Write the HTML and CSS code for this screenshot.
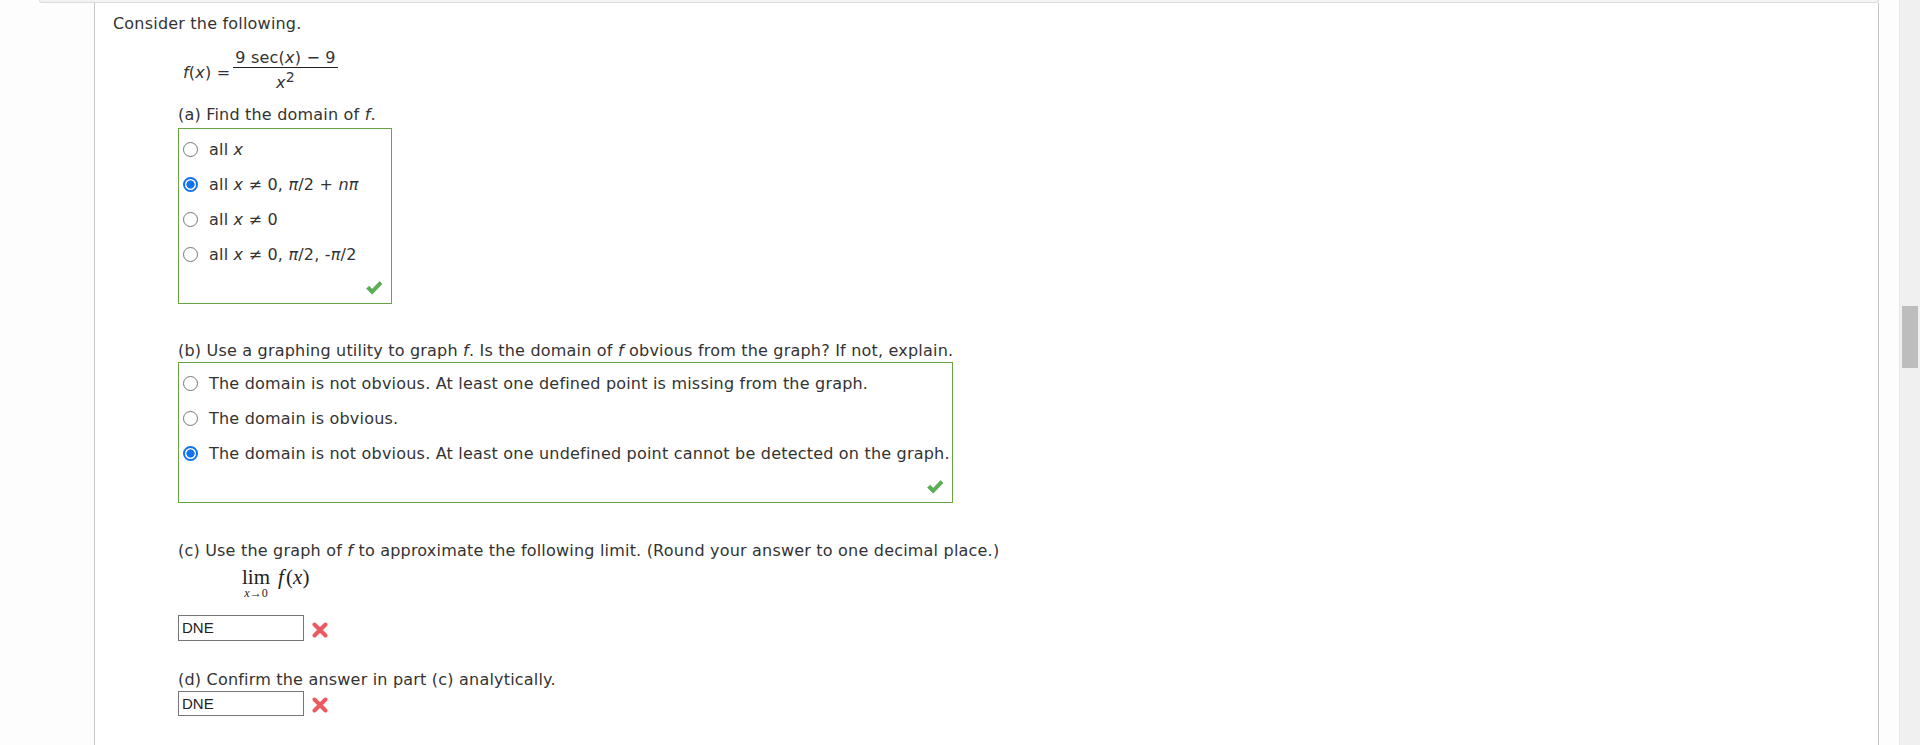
FILE: index.html
```html
<!DOCTYPE html>
<html lang="en">
<head>
<meta charset="utf-8">
<title>Consider the following</title>
<link rel="stylesheet" href="styles.css">
</head>
<body>
<div class="app">
  <div class="page">
    <div class="topstrip"></div>
    <div class="panel">
      <p class="intro">Consider the following.</p>
      <div class="formula">
        <span class="lhs"><i>f</i>(<i>x</i>) =</span>
        <span class="frac">
          <span class="num">9 sec(<i>x</i>) − 9</span>
          <span class="den"><i>x</i><sup>2</sup></span>
        </span>
      </div>

      <p class="q q-a">(a) Find the domain of <i>f</i>.</p>
      <div class="choices choices-a">
        <div class="opt"><span class="radio"></span><span>all <i>x</i></span></div>
        <div class="opt"><span class="radio checked"></span><span>all <i>x</i> ≠ 0, <i>π</i>/2 + <i>nπ</i></span></div>
        <div class="opt"><span class="radio"></span><span>all <i>x</i> ≠ 0</span></div>
        <div class="opt"><span class="radio"></span><span>all <i>x</i> ≠ 0, <i>π</i>/2, -<i>π</i>/2</span></div>
        <div class="foot">
          <svg class="check" width="18" height="16" viewBox="0 0 18 16"><path d="M1.5 8.6 L4.2 6.2 L7.2 9.2 L14.6 1.6 L17 4 L7.2 14.2 Z" fill="#5cb054" stroke="#4a9c44" stroke-width="0.6" stroke-linejoin="round"/></svg>
        </div>
      </div>

      <p class="q q-b">(b) Use a graphing utility to graph <i>f</i>. Is the domain of <i>f</i> obvious from the graph? If not, explain.</p>
      <div class="choices choices-b">
        <div class="opt"><span class="radio"></span><span>The domain is not obvious. At least one defined point is missing from the graph.</span></div>
        <div class="opt"><span class="radio"></span><span>The domain is obvious.</span></div>
        <div class="opt"><span class="radio checked"></span><span>The domain is not obvious. At least one undefined point cannot be detected on the graph.</span></div>
        <div class="foot">
          <svg class="check" width="18" height="16" viewBox="0 0 18 16"><path d="M1.5 8.6 L4.2 6.2 L7.2 9.2 L14.6 1.6 L17 4 L7.2 14.2 Z" fill="#5cb054" stroke="#4a9c44" stroke-width="0.6" stroke-linejoin="round"/></svg>
        </div>
      </div>

      <p class="q q-c">(c) Use the graph of <i>f</i> to approximate the following limit. (Round your answer to one decimal place.)</p>
      <div class="limit">
        <span class="limcol"><span class="lim">lim</span><span class="sub"><i>x</i>→0</span></span>
        <span class="fx"><i>f</i> (<i>x</i>)</span>
      </div>
      <div class="answer answer-c">
        <span class="input">DNE</span>
        <svg class="cross" width="16" height="16" viewBox="0 0 16 16"><path d="M2.5 2.5 L13.5 13.5 M13.5 2.5 L2.5 13.5" stroke="#ec5a5f" stroke-width="4" stroke-linecap="round"/></svg>
      </div>

      <p class="q q-d">(d) Confirm the answer in part (c) analytically.</p>
      <div class="answer answer-d">
        <span class="input">DNE</span>
        <svg class="cross" width="16" height="16" viewBox="0 0 16 16"><path d="M2.5 2.5 L13.5 13.5 M13.5 2.5 L2.5 13.5" stroke="#ec5a5f" stroke-width="4" stroke-linecap="round"/></svg>
      </div>
    </div>
  </div>
  <div class="scrollbar"><div class="thumb"></div></div>
</div>
</body>
</html>
```

FILE: styles.css
```css
html, body {
  margin: 0;
  padding: 0;
  height: 745px;
  overflow: hidden;
  background: #fdfdfd;
}

.app {
  display: flex;
  height: 745px;
  font-family: "DejaVu Sans", Verdana, sans-serif;
  font-size: 16px;
  letter-spacing: 0.2px;
  color: #333;
}

.page {
  flex: 1;
  display: flex;
  flex-direction: column;
  min-width: 0;
}

.topstrip {
  height: 2px;
  margin: 0 20px 0 39px;
  background: #f3f3f3;
  border: 1px solid #dcdcdc;
  border-top: none;
  border-radius: 0 0 3px 3px;
}

.panel {
  flex: 1;
  margin: 0 20px 0 94px;
  border-left: 1px solid #c6c6c6;
  border-right: 1px solid #c6c6c6;
  background: #fff;
  padding: 11px 0 0 18px;
}

p { margin: 0; }

.intro {
  line-height: 20px;
}

i { font-style: italic; }

.formula {
  display: flex;
  align-items: center;
  margin: 14px 0 0 70px;
}

.lhs {
  line-height: 20px;
  padding-top: 4px;
  margin-right: 3px;
}

.frac {
  display: inline-flex;
  flex-direction: column;
  align-items: center;
}

.num {
  line-height: 19px;
  padding: 0 2px;
  border-bottom: 1px solid #222;
}

.den {
  line-height: 20px;
  margin-top: 5px;
}

.den sup {
  font-size: 14px;
  line-height: 0;
  vertical-align: 6px;
}

.q {
  margin-left: 65px;
  line-height: 20px;
}

.q-a { margin-top: 12px; }
.q-b { margin-top: 37px; }
.q-c { margin-top: 38px; }
.q-d { margin-top: 29px; }

.choices {
  margin: 3px 0 0 65px;
  border: 1px solid #67a543;
  padding-top: 3px;
  box-sizing: border-box;
}

.choices-a { width: 214px; margin-top: 3px; }
.choices-b { width: 775px; margin-top: 1px; }

.opt {
  display: flex;
  align-items: center;
  height: 35px;
}

.radio {
  width: 13px;
  height: 13px;
  border: 1px solid #767676;
  border-radius: 50%;
  margin: 0 11px 0 4px;
  flex: none;
  background: #fff;
}

.radio.checked {
  width: 11px;
  height: 11px;
  border: 2px solid #1173f0;
  background: radial-gradient(circle, #1173f0 0 3.8px, #fff 4.4px);
}

.foot {
  height: 31px;
  display: flex;
  align-items: center;
  justify-content: flex-end;
  padding-right: 8px;
}

.limit {
  display: flex;
  align-items: flex-start;
  margin: 6px 0 0 129px;
  font-family: "Liberation Serif", "Times New Roman", serif;
  letter-spacing: 0;
  color: #222;
}

.limcol {
  display: inline-flex;
  flex-direction: column;
  align-items: center;
}

.lim {
  font-size: 21px;
  line-height: 20px;
}

.sub {
  font-size: 12px;
  line-height: 12px;
}

.fx {
  font-size: 21px;
  line-height: 20px;
  margin-left: 8px;
  word-spacing: -3px;
}

.answer {
  display: flex;
  align-items: center;
  margin-left: 65px;
}

.answer-c { margin-top: 16px; }
.answer-d { margin-top: 1px; }

.input {
  box-sizing: border-box;
  width: 126px;
  height: 26px;
  border: 1px solid #767676;
  padding: 0 3px;
  font-family: "Liberation Sans", Arial, sans-serif;
  font-size: 15px;
  letter-spacing: 0;
  line-height: 24px;
  color: #222;
  background: #fff;
}

.answer-d .input { height: 25px; line-height: 23px; }

.cross {
  margin-left: 8px;
  margin-top: 3px;
}

.scrollbar {
  width: 21px;
  flex: none;
  background: #f0f0f0;
  border-left: 1px solid #e8e8e8;
  box-sizing: border-box;
}

.thumb {
  margin: 306px 2px 0 2px;
  height: 62px;
  background: #bdbdbd;
}
```
